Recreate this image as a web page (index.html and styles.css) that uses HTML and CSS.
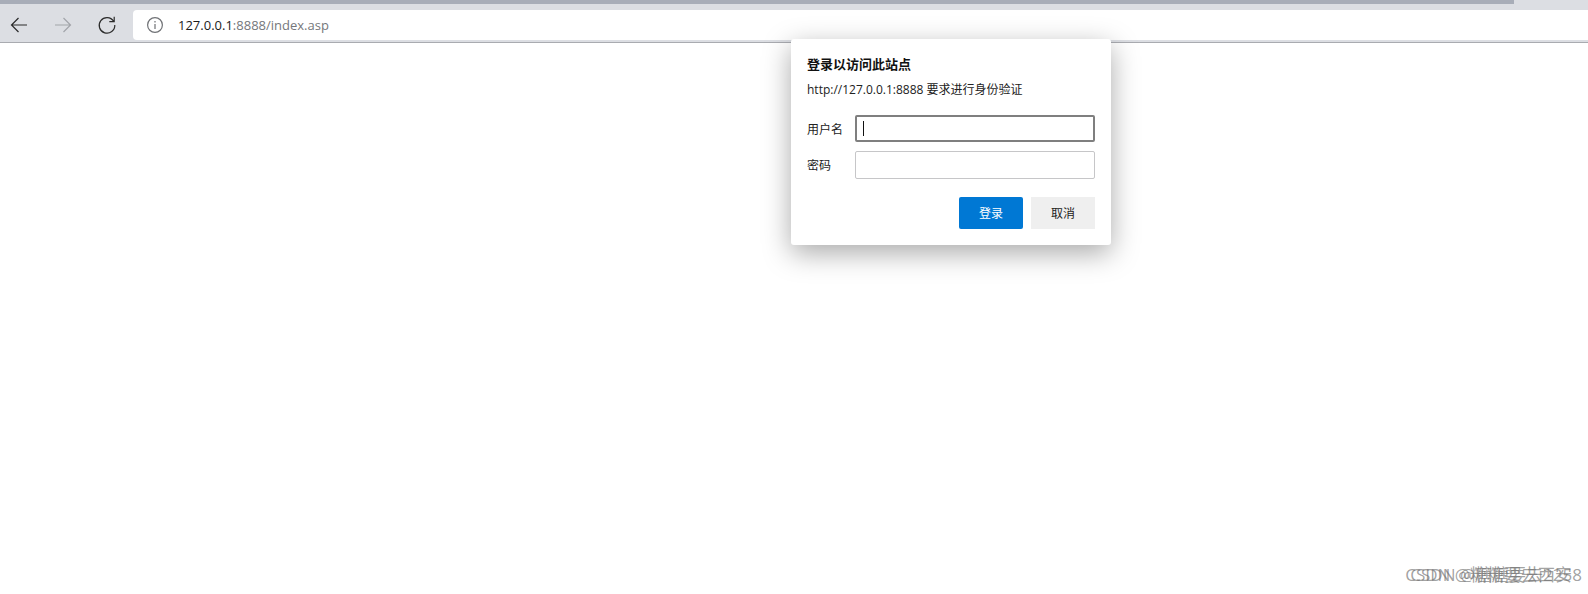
FILE: index.html
```html
<!DOCTYPE html>
<html lang="zh-CN">
<head>
<meta charset="utf-8">
<title>127.0.0.1:8888/index.asp</title>
<link rel="stylesheet" href="styles.css">
</head>
<body>
<header class="chrome">
  <div class="tabstrip"><div class="tabfill"></div></div>
  <div class="toolbar">
    <button class="navbtn" aria-label="后退"><svg width="20" height="20" viewBox="0 0 20 20"><path d="M18 10H2.5M9.5 3 2.5 10l7 7" class="ic dark"/></svg></button>
    <button class="navbtn" aria-label="前进"><svg width="20" height="20" viewBox="0 0 20 20"><path d="M2 10h15.5M10.5 3l7 7-7 7" class="ic light"/></svg></button>
    <button class="navbtn" aria-label="刷新"><svg width="20" height="20" viewBox="0 0 20 20"><path d="M16.6 6.2A7.8 7.8 0 1 0 17.8 10M17.2 1.8v4.9h-4.9" class="ic dark"/></svg></button>
    <div class="omnibox">
      <svg class="info" width="16" height="16" viewBox="0 0 16 16"><circle cx="8" cy="8" r="7.4" class="ic mid"/><path d="M8 7v5M8 4v1.6" class="ic mid"/></svg>
      <span class="url"><span class="host">127.0.0.1</span>:8888/index.asp</span>
    </div>
  </div>
</header>
<main class="page"></main>
<section class="dialog">
  <h1 class="title">登录以访问此站点</h1>
  <p class="desc">http://127.0.0.1:8888 要求进行身份验证</p>
  <div class="field"><label class="lbl">用户名</label><div class="input focused"><span class="caret"></span></div></div>
  <div class="field"><label class="lbl">密码</label><div class="input"></div></div>
  <div class="actions"><button class="btn primary">登录</button><button class="btn">取消</button></div>
</section>
<div class="wm wm-a">CSDN @糖糖要去西安</div>
<div class="wm wm-b">CSDN @糖糖要去2258</div>
</body>
</html>
```
FILE: styles.css
```css
* { box-sizing: border-box; }
html, body { margin: 0; height: 100%; background: #fff; overflow: hidden; }
body { font-family: "Open Sans", "Noto Sans CJK SC", sans-serif; color: #1a1a1a; }
.chrome { height: 43px; background: #dcdee3; border-bottom: 1px solid #a9abb0; }
.tabstrip { height: 4px; }
.tabfill { width: 1514px; height: 4px; background: #a8adb8; }
.toolbar { display: flex; align-items: center; height: 38px; padding-top: 4px; }
.navbtn { width: 44px; height: 30px; padding: 0; border: 0; background: none; display: flex; align-items: center; justify-content: center; flex: none; margin-right: 0; }
.navbtn:first-child { margin-left: -3px; }
.ic { fill: none; stroke-width: 1.2; }
.dark { stroke: #2b2b2b; }
.light { stroke: #a2a5aa; }
.mid { stroke: #6f7175; }
.omnibox { flex: 1; height: 30px; margin-left: 4px; background: #fff; border-radius: 4px 0 0 4px; display: flex; align-items: center; padding-left: 14px; gap: 15px; }
.info { flex: none; }
.url { font-size: 13px; color: #75777b; }
.host { color: #1c1c1c; }
.page { height: 551px; background: #fff; }
.dialog { position: absolute; left: 791px; top: 39px; width: 320px; height: 206px; padding: 16px; background: #fff; border-radius: 3px; box-shadow: 0 8px 28px rgba(0,0,0,.34); }
.title { margin: 0; font-size: 13px; line-height: 18px; font-weight: 700; color: #111; }
.desc { margin: 8px 0 16px; font-size: 12px; line-height: 18px; color: #222; }
.field { display: flex; align-items: center; margin-bottom: 9px; }
.lbl { width: 48px; flex: none; font-size: 12px; color: #222; }
.input { width: 240px; height: 28px; border: 1px solid #c6c6c8; border-radius: 2px; display: flex; align-items: center; padding-left: 7px; }
.focused { height: 27px; border: 2px solid #7f7f7f; padding-left: 6px; }
.caret { width: 1px; height: 15px; background: #111; }
.actions { display: flex; justify-content: flex-end; gap: 8px; margin-top: 18px; }
.btn { width: 64px; height: 32px; border: 0; padding: 0; background: #efefef; color: #222; font: 12px "Open Sans", "Noto Sans CJK SC", sans-serif; }
.primary { background: #0078d4; color: #fff; border-radius: 2px; }
.wm { position: absolute; top: 563px; font-size: 17px; line-height: 24px; color: rgba(110,110,110,.65); white-space: nowrap; }
.wm-a { right: 16px; }
.wm-b { right: 6px; }
```
